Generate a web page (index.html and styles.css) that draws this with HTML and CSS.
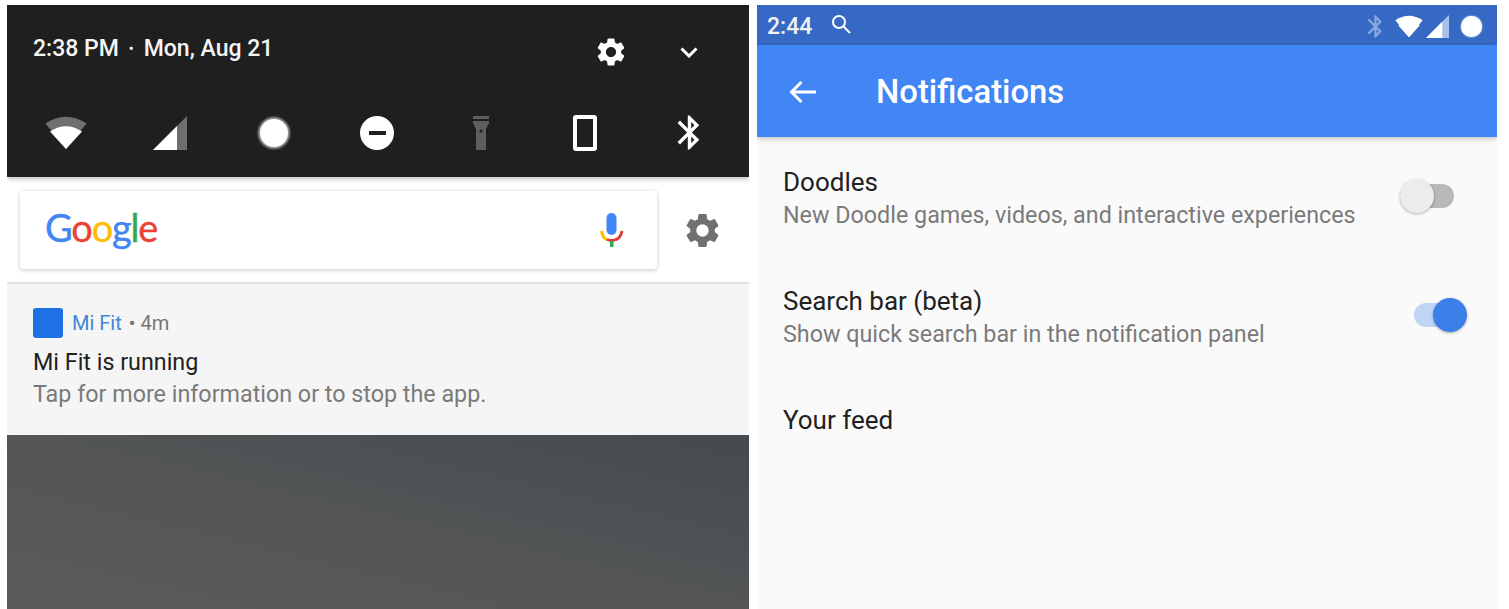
FILE: index.html
```html
<!DOCTYPE html>
<html lang="en">

<head>
    <meta charset="UTF-8">
    <meta name="viewport" content="width=device-width, initial-scale=1.0">
    <title>Notifications</title>
    <link rel="stylesheet" href="styles.css">
</head>

<body>
    <svg class="sprite" width="0" height="0">
        <symbol id="gear" viewBox="0 0 24 24">
            <path d="M19.14 12.94c.04-.3.06-.61.06-.94 0-.32-.02-.64-.07-.94l2.03-1.58c.18-.14.23-.41.12-.61l-1.92-3.32c-.12-.22-.37-.29-.59-.22l-2.39.96c-.5-.38-1.03-.7-1.62-.94l-.36-2.54c-.04-.24-.24-.41-.48-.41h-3.84c-.24 0-.43.17-.47.41l-.36 2.54c-.59.24-1.13.57-1.62.94l-2.39-.96c-.22-.08-.47 0-.59.22L2.74 8.87c-.12.21-.08.47.12.61l2.03 1.58c-.05.3-.09.63-.09.94s.02.64.07.94l-2.03 1.58c-.18.14-.23.41-.12.61l1.92 3.32c.12.22.37.29.59.22l2.39-.96c.5.38 1.03.7 1.62.94l.36 2.54c.05.24.24.41.48.41h3.84c.24 0 .44-.17.47-.41l.36-2.54c.59-.24 1.13-.56 1.62-.94l2.39.96c.22.08.47 0 .59-.22l1.92-3.32c.12-.22.07-.47-.12-.61l-2.01-1.58zM12 15.6c-1.98 0-3.6-1.62-3.6-3.6s1.62-3.6 3.6-3.6 3.6 1.62 3.6 3.6-1.62 3.6-3.6 3.6z"/>
        </symbol>
        <symbol id="bluetooth" viewBox="0 0 24 24">
            <path d="M17.71 7.71L12 2h-1v7.59L6.41 5 5 6.41 10.59 12 5 17.59 6.41 19 11 14.41V22h1l5.71-5.71-4.3-4.29 4.3-4.29zM13 5.83l1.88 1.88L13 9.59V5.83zm1.88 10.46L13 18.17v-3.76l1.88 1.88z"/>
        </symbol>
        <symbol id="wifi" viewBox="0 0 42 34">
            <path class="dim" d="M0.5 7.5Q21 -6 41.5 7.5L21 33z"/>
            <path class="lit" d="M5 15.5Q21 5 37 15.5L21 33z"/>
        </symbol>
        <symbol id="signal" viewBox="0 0 34 34">
            <path class="dim" d="M0 34L34 0V34z"/>
            <path class="lit" d="M0 34L24 10V34z"/>
        </symbol>
    </svg>

    <div class="panel shade">
        <header class="shade-head">
            <div class="clock-row">
                <span class="clock">2:38 PM<span class="dot">•</span>Mon, Aug 21</span>
                <svg class="icon-gear"><use href="#gear"/></svg>
                <svg class="icon-chevron" viewBox="0 0 18 11"><path d="M1.5 1.5L9 9l7.5-7.5"/></svg>
            </div>
            <div class="tiles">
                <svg class="tile-wifi"><use href="#wifi"/></svg>
                <svg class="tile-signal"><use href="#signal"/></svg>
                <div class="tile-circle"></div>
                <div class="tile-dnd"><span></span></div>
                <svg class="tile-flash" viewBox="0 0 16 34">
                    <path d="M0 0h16v3H0zM0 5h16v2l-3 6v21H3V13L0 7z"/>
                    <circle cx="8" cy="15" r="1.6"/>
                </svg>
                <div class="tile-phone"></div>
                <svg class="tile-bt"><use href="#bluetooth"/></svg>
            </div>
        </header>

        <section class="search-row">
            <div class="search-card">
                <span class="logo"><span class="g-blue">G</span><span class="g-red">o</span><span class="g-yellow">o</span><span class="g-blue">g</span><span class="g-green">l</span><span class="g-red">e</span></span>
                <svg class="mic" viewBox="0 0 24 34">
                    <rect x="6.5" y="0" width="10" height="22" rx="5" fill="#4285f4"/>
                    <path d="M1.5 18Q3 26 7 26.5" fill="none" stroke="#fbbc05" stroke-width="3"/>
                    <path d="M7 26.5Q11.500 28.500 16 26.500Q20.500 25 22 18" fill="none" stroke="#e53935" stroke-width="3"/>
                    <rect x="10" y="28" width="3.500" height="6" fill="#34a853"/>
                </svg>
            </div>
            <svg class="search-gear"><use href="#gear"/></svg>
        </section>

        <section class="notif">
            <div class="notif-head">
                <span class="app-icon"></span>
                <span class="app-name">Mi Fit</span>
                <span class="app-time">• 4m</span>
            </div>
            <div class="notif-title">Mi Fit is running</div>
            <div class="notif-text">Tap for more information or to stop the app.</div>
        </section>

        <div class="wallpaper"></div>
    </div>

    <div class="panel settings">
        <div class="status-bar">
            <span class="status-time">2:44</span>
            <svg class="status-search" viewBox="0 0 20 20"><circle cx="8" cy="8" r="6"/><path d="M12.500 12.500L19 19"/></svg>
            <span class="spacer"></span>
            <svg class="status-bt"><use href="#bluetooth"/></svg>
            <svg class="status-wifi"><use href="#wifi"/></svg>
            <svg class="status-signal"><use href="#signal"/></svg>
            <span class="status-circle"></span>
        </div>
        <div class="toolbar">
            <svg class="back" viewBox="0 0 28 24"><path d="M27 12H3M12.500 2L2.500 12l10 10"/></svg>
            <h1>Notifications</h1>
        </div>
        <div class="list">
            <div class="row">
                <div>
                    <div class="row-title">Doodles</div>
                    <div class="row-text">New Doodle games, videos, and interactive experiences</div>
                </div>
                <div class="toggle"></div>
            </div>
            <div class="row">
                <div>
                    <div class="row-title">Search bar (beta)</div>
                    <div class="row-text">Show quick search bar in the notification panel</div>
                </div>
                <div class="toggle on"></div>
            </div>
            <div class="row">
                <div class="row-title">Your feed</div>
            </div>
        </div>
    </div>
</body>

</html>
```

FILE: styles.css
```css
* {
    box-sizing: border-box;
}

html, body {
    height: 100%;
}

body {
    margin: 0;
    padding: 5px 12px 0 7px;
    display: flex;
    gap: 8px;
    overflow: hidden;
    background-color: #fff;
    font-family: Roboto, "Liberation Sans", sans-serif;
}

.sprite {
    position: absolute;
}

.panel {
    height: 604px;
    overflow: hidden;
    display: flex;
    flex-direction: column;
}

.dim {
    fill: var(--dim, #6f6f6f);
}

.lit {
    fill: #fff;
}

/* left: notification shade */
.shade {
    width: 742px;
}

.shade-head {
    height: 172px;
    background-color: #1f1f1f;
    box-shadow: 0 2px 5px rgba(0, 0, 0, 0.25);
    position: relative;
}

.clock-row {
    display: flex;
    align-items: center;
    height: 94px;
    padding: 0 51px 0 26px;
}

.clock {
    flex: 1;
    margin-top: -7px;
    font-size: 23px;
    font-weight: 500;
    color: #f5f5f5;
}

.dot {
    margin: 0 10px;
    font-size: 14px;
    vertical-align: 2px;
}

.icon-gear {
    width: 34px;
    height: 34px;
    fill: #fff;
    margin-right: 52px;
}

.icon-chevron {
    width: 18px;
    height: 11px;
    fill: none;
    stroke: #fff;
    stroke-width: 3;
}

.tiles {
    display: grid;
    grid-template-columns: repeat(7, 1fr);
    justify-items: center;
    align-items: center;
    height: 34px;
    margin-top: 17px;
    padding: 0 8px 0 7px;
}

.tile-wifi {
    width: 42px;
    height: 34px;
}

.tile-signal {
    width: 34px;
    height: 34px;
}

.tile-circle {
    width: 28px;
    height: 28px;
    border-radius: 50%;
    background-color: #fff;
    box-shadow: 0 0 2px 2px #9a9a9a;
}

.tile-dnd {
    width: 34px;
    height: 34px;
    border-radius: 50%;
    background-color: #fff;
    display: flex;
    align-items: center;
    justify-content: center;
}

.tile-dnd span {
    width: 17px;
    height: 4px;
    background-color: #1f1f1f;
}

.tile-flash {
    width: 16px;
    height: 34px;
    fill: #5e5e5e;
}

.tile-flash circle {
    fill: #1f1f1f;
}

.tile-phone {
    width: 24px;
    height: 36px;
    margin: -1px 0;
    border: 4px solid #fff;
    border-radius: 3px;
}

.tile-bt {
    width: 41px;
    height: 41px;
    margin: -4px 0 -3px;
    fill: #fff;
}

.search-row {
    height: 105px;
    padding: 14px 26px 0 13px;
    display: flex;
    background-color: #fff;
}

.search-card {
    width: 637px;
    height: 78px;
    padding: 0 33px 0 25px;
    display: flex;
    align-items: center;
    justify-content: space-between;
    background-color: #fff;
    border-radius: 3px;
    box-shadow: 0 1px 4px rgba(0, 0, 0, 0.22);
}

.logo {
    margin-top: -7px;
    font-family: Lato, sans-serif;
    font-size: 38px;
    letter-spacing: -1.2px;
    -webkit-text-stroke: 0.4px;
}

.g-blue { color: #4285f4; }
.g-red { color: #ea4335; }
.g-yellow { color: #fbbc05; }
.g-green { color: #34a853; }

.mic {
    width: 24px;
    height: 34px;
}

.search-gear {
    width: 41px;
    height: 41px;
    margin: 19px 0 0 25px;
    fill: #707070;
}

.notif {
    height: 153px;
    padding: 24px 26px 0;
    background-color: #f5f5f5;
    border-top: 2px solid #e2e2e2;
}

.notif-head {
    display: flex;
    align-items: center;
    height: 30px;
    font-size: 20px;
}

.app-icon {
    width: 30px;
    height: 30px;
    margin-right: 9px;
    border-radius: 3px;
    background-color: #1f6fe5;
}

.app-name {
    color: #4285d8;
    margin-right: 7px;
}

.app-time {
    color: #757575;
}

.notif-title {
    margin-top: 8px;
    font-size: 23.3px;
    line-height: 32px;
    color: #212121;
}

.notif-text {
    margin-top: 1px;
    font-size: 23.3px;
    line-height: 31px;
    color: #7a7a7a;
}

.wallpaper {
    flex: 1;
    background: linear-gradient(to bottom left, #444a4e, #535556 50%, #5b5b5b);
}

/* right: settings screen */
.settings {
    width: 740px;
    background-color: #fafafa;
}

.status-bar {
    height: 40px;
    padding: 2px 15px 0 10px;
    display: flex;
    align-items: center;
    background-color: #3669c4;
}

.status-time {
    font-size: 23px;
    font-weight: 500;
    color: #f2f2f2;
}

.status-search {
    width: 20px;
    height: 20px;
    margin: -4px 0 0 19px;
    fill: none;
    stroke: #fff;
    stroke-width: 2;
}

.spacer {
    flex: 1;
}

.status-bt {
    width: 27px;
    height: 27px;
    fill: #8aa8de;
    margin-right: 6px;
}

.status-wifi {
    --dim: #fff;
    width: 28px;
    height: 23px;
    margin-right: 3px;
}

.status-signal {
    --dim: #a9c0ea;
    width: 23px;
    height: 23px;
    margin-right: 12px;
}

.status-circle {
    width: 21px;
    height: 21px;
    border-radius: 50%;
    background-color: #fff;
    box-shadow: 0 0 2px #fff;
}

.toolbar {
    height: 92px;
    padding: 2px 0 0 32px;
    display: flex;
    align-items: center;
    background-color: #4285f4;
    box-shadow: 0 2px 5px rgba(0, 0, 0, 0.22);
    position: relative;
}

.back {
    width: 28px;
    height: 24px;
    fill: none;
    stroke: #fff;
    stroke-width: 3;
}

.toolbar h1 {
    margin: 0 0 0 59px;
    font-size: 32.8px;
    font-weight: 500;
    color: #fff;
}

.list {
    padding: 29px 27px 0 26px;
}

.row {
    height: 119px;
    display: flex;
    justify-content: space-between;
}

.row-title {
    font-size: 26px;
    line-height: 33px;
    color: #212121;
}

.row-text {
    font-size: 23.3px;
    line-height: 33px;
    color: #7a7a7a;
}

.toggle {
    width: 54px;
    height: 24px;
    margin: 18px 16px 0 0;
    border-radius: 12px;
    background-color: #b9b9b9;
    position: relative;
}

.toggle::after {
    content: "";
    position: absolute;
    left: 0;
    top: -5px;
    width: 34px;
    height: 34px;
    border-radius: 50%;
    background-color: #ececec;
    box-shadow: 0 1px 3px rgba(0, 0, 0, 0.3);
}

.toggle.on {
    width: 44px;
    margin-right: 12px;
    background-color: #bfd5f6;
}

.toggle.on::after {
    left: 19px;
    background-color: #3b7fe8;
}
```
